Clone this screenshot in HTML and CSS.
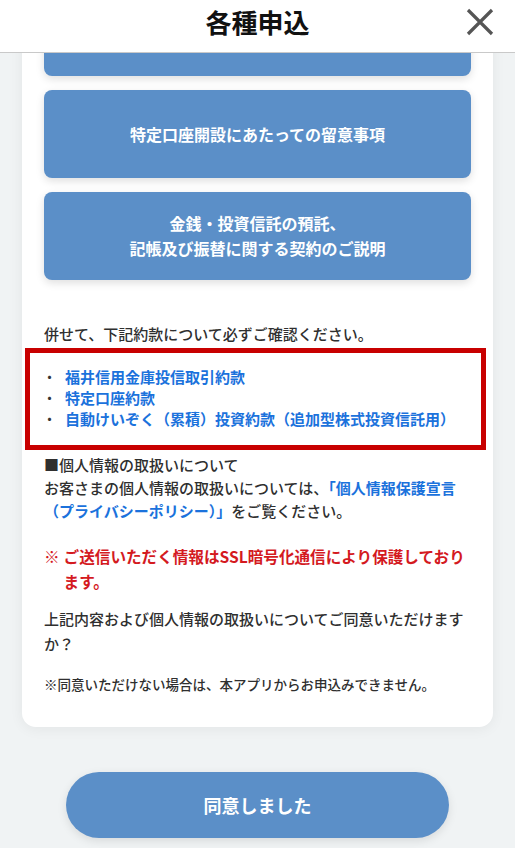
FILE: index.html
```html
<!DOCTYPE html>
<html lang="ja">
<head>
<meta charset="utf-8">
<meta name="viewport" content="width=device-width, initial-scale=1">
<title>各種申込</title>
<link rel="stylesheet" href="styles.css">
</head>
<body>
  <header class="app-header">
    <span class="spacer"></span>
    <h1 class="app-title">各種申込</h1>
    <button class="close-btn" type="button" aria-label="閉じる">
      <svg width="28" height="28" viewBox="0 0 28 28" aria-hidden="true">
        <path d="M2 2 L26 26 M26 2 L2 26" stroke="#555" stroke-width="3.2" stroke-linecap="butt" fill="none"/>
      </svg>
    </button>
  </header>

  <main class="content">
    <section class="card">
      <div class="doc-buttons">
        <a class="doc-btn" href="#" aria-label="重要事項説明書"></a>
        <a class="doc-btn" href="#">特定口座開設にあたっての留意事項</a>
        <a class="doc-btn" href="#">金銭・投資信託の預託、<br>記帳及び振替に関する契約のご説明</a>
      </div>

      <p class="intro">併せて、下記約款について必ずご確認ください。</p>

      <ul class="terms-box">
        <li><span class="bullet">・</span><a href="#">福井信用金庫投信取引約款</a></li>
        <li><span class="bullet">・</span><a href="#">特定口座約款</a></li>
        <li><span class="bullet">・</span><a href="#">自動けいぞく（累積）投資約款（追加型株式投資信託用）</a></li>
      </ul>

      <p class="privacy">■個人情報の取扱いについて<br>お客さまの個人情報の取扱いについては、<a href="#"><span>「個人情報保護宣言</span><span>（プライバシーポリシー）」</span></a>をご覧ください。</p>

      <p class="ssl-note"><span class="mark">※</span><span>ご送信いただく情報はSSL暗号化通信により保護しております。</span></p>

      <p class="question">上記内容および個人情報の取扱いについてご同意いただけますか？</p>

      <p class="small-note">※同意いただけない場合は、本アプリからお申込みできません。</p>
    </section>

    <button class="agree-btn" type="button">同意しました</button>
  </main>
</body>
</html>
```
FILE: styles.css
```css
* {
  box-sizing: border-box;
}

html, body {
  margin: 0;
  padding: 0;
}

body {
  background: #f0f3f4;
  font-family: "Noto Sans CJK JP", "Noto Sans", sans-serif;
  color: #2f2f2f;
  width: 515px;
  height: 848px;
  overflow: hidden;
}

/* top bar */
.app-header {
  position: relative;
  z-index: 2;
  height: 53px;
  background: #fff;
  border-bottom: 1px solid #c9c9c9;
  display: grid;
  grid-template-columns: 1fr auto 1fr;
  align-items: center;
  padding-bottom: 9px;
}

.app-title {
  margin: 0;
  font-size: 26px;
  font-weight: 700;
  color: #111;
  line-height: 40px;
}

.close-btn {
  justify-self: end;
  margin-right: 20px;
  width: 30px;
  height: 30px;
  padding: 1px;
  border: 0;
  background: none;
  display: flex;
  align-items: center;
  justify-content: center;
}

/* scrolling area */
.content {
  padding: 0 22px 10px;
  display: flex;
  flex-direction: column;
  align-items: center;
}

.card {
  width: 471px;
  margin-top: -87px;
  padding: 22px 22px 33px;
  background: #fff;
  border-radius: 14px;
  box-shadow: 0 2px 14px rgba(0, 0, 0, 0.06);
}

.doc-buttons {
  display: flex;
  flex-direction: column;
  gap: 14px;
}

.doc-btn {
  height: 88px;
  display: flex;
  align-items: center;
  justify-content: center;
  text-align: center;
  background: #5b8fc8;
  color: #fff;
  text-decoration: none;
  font-size: 16px;
  font-weight: 700;
  line-height: 25px;
  border-radius: 8px;
  box-shadow: 0 3px 8px rgba(0, 0, 0, 0.13);
}

.intro,
.privacy,
.question,
.small-note {
  font-weight: 500;
}

.intro {
  margin: 42px 0 0;
  font-size: 15px;
  line-height: 23px;
}

.terms-box {
  list-style: none;
  margin: 3px -15px 0 -19px;
  padding: 13px 0 16px 12px;
  border: 5px solid #c80000;
  font-size: 15px;
  line-height: 21px;
}

.terms-box li {
  display: flex;
}

.bullet {
  flex: 0 0 23px;
  color: #333;
}

.terms-box a,
.privacy a {
  color: #1b72dc;
  font-weight: 700;
  text-decoration: none;
}

.privacy {
  margin: 3px 0 0;
  font-size: 15px;
  line-height: 23px;
}

.ssl-note {
  margin: 22px 0 0;
  display: flex;
  gap: 4px;
  color: #d41a1f;
  font-size: 15.6px;
  font-weight: 700;
  line-height: 25px;
}

.ssl-note .mark {
  flex: 0 0 auto;
  font-weight: 400;
}

.question {
  margin: 12px 0 0;
  font-size: 15px;
  line-height: 25px;
}

.small-note {
  margin: 18px 0 0;
  font-size: 13.5px;
  line-height: 20px;
}

.agree-btn {
  margin-top: 45px;
  width: 383px;
  height: 66px;
  border: 0;
  border-radius: 33px;
  background: #5b8fc8;
  color: #fff;
  font-family: inherit;
  font-size: 18px;
  font-weight: 700;
  box-shadow: 0 3px 10px rgba(0, 0, 0, 0.1);
}
```
